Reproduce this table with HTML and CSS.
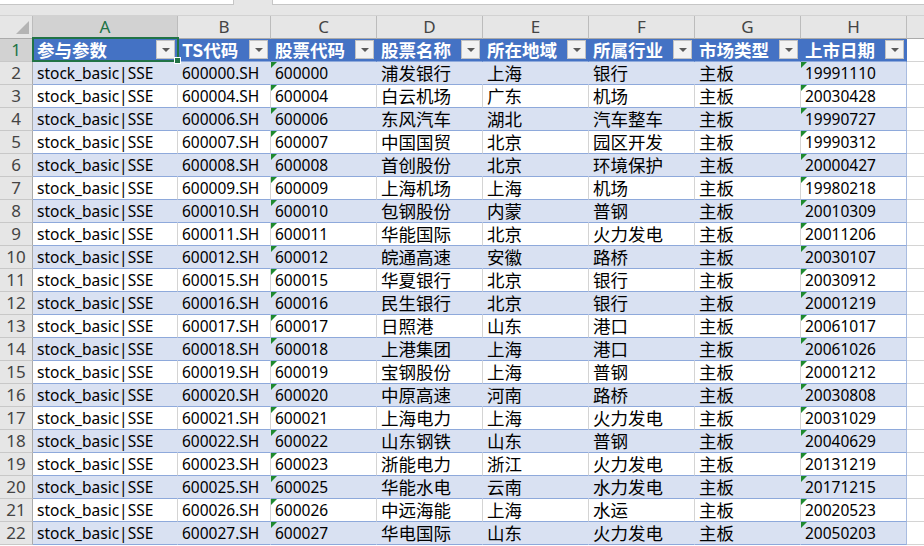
FILE: index.html
```html
<!DOCTYPE html>
<html lang="zh-CN">
<head>
<meta charset="utf-8">
<title>stock_basic</title>
<link rel="stylesheet" href="styles.css">
</head>
<body>
<div class="topbar"><div class="box1"></div><div class="box2"></div></div>
<div class="gap"></div>
<div class="sheet">
  <div class="row colhdr">
    <div class="corner"><span class="tri"></span></div>
    <div class="ch sel">A</div><div class="ch">B</div><div class="ch">C</div><div class="ch">D</div><div class="ch">E</div><div class="ch">F</div><div class="ch">G</div><div class="ch">H</div><div class="ch last"></div>
  </div>
  <div class="row head">
    <div class="rh sel">1</div>
    <div class="hd a1">参与参数<span class="fb"></span></div>
    <div class="hd">TS代码<span class="fb"></span></div>
    <div class="hd">股票代码<span class="fb"></span></div>
    <div class="hd">股票名称<span class="fb"></span></div>
    <div class="hd">所在地域<span class="fb"></span></div>
    <div class="hd">所属行业<span class="fb"></span></div>
    <div class="hd">市场类型<span class="fb"></span></div>
    <div class="hd">上市日期<span class="fb"></span></div>
    <div class="x"></div>
  </div>
  <div class="row band"><div class="rh">2</div><div class="c">stock_basic|SSE</div><div class="c">600000.SH</div><div class="c t">600000</div><div class="c">浦发银行</div><div class="c">上海</div><div class="c">银行</div><div class="c">主板</div><div class="c t h">19991110</div><div class="x"></div></div>
  <div class="row"><div class="rh">3</div><div class="c">stock_basic|SSE</div><div class="c">600004.SH</div><div class="c t">600004</div><div class="c">白云机场</div><div class="c">广东</div><div class="c">机场</div><div class="c">主板</div><div class="c t h">20030428</div><div class="x"></div></div>
  <div class="row band"><div class="rh">4</div><div class="c">stock_basic|SSE</div><div class="c">600006.SH</div><div class="c t">600006</div><div class="c">东风汽车</div><div class="c">湖北</div><div class="c">汽车整车</div><div class="c">主板</div><div class="c t h">19990727</div><div class="x"></div></div>
  <div class="row"><div class="rh">5</div><div class="c">stock_basic|SSE</div><div class="c">600007.SH</div><div class="c t">600007</div><div class="c">中国国贸</div><div class="c">北京</div><div class="c">园区开发</div><div class="c">主板</div><div class="c t h">19990312</div><div class="x"></div></div>
  <div class="row band"><div class="rh">6</div><div class="c">stock_basic|SSE</div><div class="c">600008.SH</div><div class="c t">600008</div><div class="c">首创股份</div><div class="c">北京</div><div class="c">环境保护</div><div class="c">主板</div><div class="c t h">20000427</div><div class="x"></div></div>
  <div class="row"><div class="rh">7</div><div class="c">stock_basic|SSE</div><div class="c">600009.SH</div><div class="c t">600009</div><div class="c">上海机场</div><div class="c">上海</div><div class="c">机场</div><div class="c">主板</div><div class="c t h">19980218</div><div class="x"></div></div>
  <div class="row band"><div class="rh">8</div><div class="c">stock_basic|SSE</div><div class="c">600010.SH</div><div class="c t">600010</div><div class="c">包钢股份</div><div class="c">内蒙</div><div class="c">普钢</div><div class="c">主板</div><div class="c t h">20010309</div><div class="x"></div></div>
  <div class="row"><div class="rh">9</div><div class="c">stock_basic|SSE</div><div class="c">600011.SH</div><div class="c t">600011</div><div class="c">华能国际</div><div class="c">北京</div><div class="c">火力发电</div><div class="c">主板</div><div class="c t h">20011206</div><div class="x"></div></div>
  <div class="row band"><div class="rh">10</div><div class="c">stock_basic|SSE</div><div class="c">600012.SH</div><div class="c t">600012</div><div class="c">皖通高速</div><div class="c">安徽</div><div class="c">路桥</div><div class="c">主板</div><div class="c t h">20030107</div><div class="x"></div></div>
  <div class="row"><div class="rh">11</div><div class="c">stock_basic|SSE</div><div class="c">600015.SH</div><div class="c t">600015</div><div class="c">华夏银行</div><div class="c">北京</div><div class="c">银行</div><div class="c">主板</div><div class="c t h">20030912</div><div class="x"></div></div>
  <div class="row band"><div class="rh">12</div><div class="c">stock_basic|SSE</div><div class="c">600016.SH</div><div class="c t">600016</div><div class="c">民生银行</div><div class="c">北京</div><div class="c">银行</div><div class="c">主板</div><div class="c t h">20001219</div><div class="x"></div></div>
  <div class="row"><div class="rh">13</div><div class="c">stock_basic|SSE</div><div class="c">600017.SH</div><div class="c t">600017</div><div class="c">日照港</div><div class="c">山东</div><div class="c">港口</div><div class="c">主板</div><div class="c t h">20061017</div><div class="x"></div></div>
  <div class="row band"><div class="rh">14</div><div class="c">stock_basic|SSE</div><div class="c">600018.SH</div><div class="c t">600018</div><div class="c">上港集团</div><div class="c">上海</div><div class="c">港口</div><div class="c">主板</div><div class="c t h">20061026</div><div class="x"></div></div>
  <div class="row"><div class="rh">15</div><div class="c">stock_basic|SSE</div><div class="c">600019.SH</div><div class="c t">600019</div><div class="c">宝钢股份</div><div class="c">上海</div><div class="c">普钢</div><div class="c">主板</div><div class="c t h">20001212</div><div class="x"></div></div>
  <div class="row band"><div class="rh">16</div><div class="c">stock_basic|SSE</div><div class="c">600020.SH</div><div class="c t">600020</div><div class="c">中原高速</div><div class="c">河南</div><div class="c">路桥</div><div class="c">主板</div><div class="c t h">20030808</div><div class="x"></div></div>
  <div class="row"><div class="rh">17</div><div class="c">stock_basic|SSE</div><div class="c">600021.SH</div><div class="c t">600021</div><div class="c">上海电力</div><div class="c">上海</div><div class="c">火力发电</div><div class="c">主板</div><div class="c t h">20031029</div><div class="x"></div></div>
  <div class="row band"><div class="rh">18</div><div class="c">stock_basic|SSE</div><div class="c">600022.SH</div><div class="c t">600022</div><div class="c">山东钢铁</div><div class="c">山东</div><div class="c">普钢</div><div class="c">主板</div><div class="c t h">20040629</div><div class="x"></div></div>
  <div class="row"><div class="rh">19</div><div class="c">stock_basic|SSE</div><div class="c">600023.SH</div><div class="c t">600023</div><div class="c">浙能电力</div><div class="c">浙江</div><div class="c">火力发电</div><div class="c">主板</div><div class="c t h">20131219</div><div class="x"></div></div>
  <div class="row band"><div class="rh">20</div><div class="c">stock_basic|SSE</div><div class="c">600025.SH</div><div class="c t">600025</div><div class="c">华能水电</div><div class="c">云南</div><div class="c">水力发电</div><div class="c">主板</div><div class="c t h">20171215</div><div class="x"></div></div>
  <div class="row"><div class="rh">21</div><div class="c">stock_basic|SSE</div><div class="c">600026.SH</div><div class="c t">600026</div><div class="c">中远海能</div><div class="c">上海</div><div class="c">水运</div><div class="c">主板</div><div class="c t h">20020523</div><div class="x"></div></div>
  <div class="row band"><div class="rh">22</div><div class="c">stock_basic|SSE</div><div class="c">600027.SH</div><div class="c t">600027</div><div class="c">华电国际</div><div class="c">山东</div><div class="c">火力发电</div><div class="c">主板</div><div class="c t h">20050203</div><div class="x"></div></div>
</div>
</body>
</html>
```

FILE: styles.css
```css
html, body {
  margin: 0;
  padding: 0;
  background: #e6e6e6;
  overflow: hidden;
  width: 924px;
  height: 546px;
}
body { background: #fff; }

.topbar {
  display: flex;
  height: 5px;
  background: #e6e6e6;
}
.box1 {
  width: 233px;
  height: 4px;
  background: #fff;
  border-right: 1px solid #c6c6c6;
  border-bottom: 1px solid #c6c6c6;
}
.box2 {
  margin-left: 38px;
  flex: 1;
  height: 4px;
  background: #fff;
  border-left: 1px solid #c6c6c6;
  border-bottom: 1px solid #c6c6c6;
}
.gap {
  height: 10px;
  border-bottom: 1px solid #d2d2d2;
  background: #e6e6e6;
}

.sheet {
  display: grid;
  grid-template-columns: 33px 145px 93px 106px 106px 106px 106px 106px 106px 1fr;
  grid-auto-rows: 23px;
  font-family: "Noto Sans CJK SC", "Noto Sans", sans-serif;
  font-size: 17.5px;
  color: #000;
}
.row { display: contents; }

.sheet > .row > div {
  box-sizing: border-box;
  white-space: nowrap;
}

/* column header row */
.corner {
  position: relative;
  background: #e6e6e6;
  border-right: 1px solid #bcbcbc;
  border-bottom: 1px solid #ababab;
}
.tri {
  position: absolute;
  right: 3px;
  bottom: 4px;
  width: 0;
  height: 0;
  border-left: 13px solid transparent;
  border-bottom: 13px solid #b4b4b4;
}
.ch {
  background: #e6e6e6;
  border-right: 1px solid #bcbcbc;
  border-bottom: 1px solid #ababab;
  text-align: center;
  font-family: "Noto Sans", "Liberation Sans", sans-serif;
  font-size: 17px;
  line-height: 22px;
  color: #444;
}
.ch.sel {
  background: #d2d2d2;
  color: #217346;
  border-bottom: 2px solid #217346;
}
.ch.last { border-right: none; }

/* row headers */
.rh {
  background: #e6e6e6;
  border-right: 1px solid #ababab;
  border-bottom: 1px solid #c8c8c8;
  text-align: center;
  font-family: "Noto Sans", "Liberation Sans", sans-serif;
  font-size: 17px;
  line-height: 22px;
  color: #444;
}
.rh.sel {
  background: #d2d2d2;
  color: #217346;
}

/* table header row */
.hd {
  position: relative;
  background: #4472c4;
  color: #fff;
  font-weight: bold;
  padding-left: 4px;
  line-height: 22px;
  border-bottom: 1px solid #8ea9db;
  border-right: 1px solid #4472c4;
}
.fb {
  position: absolute;
  right: 2px;
  top: 1px;
  width: 19px;
  height: 19px;
  box-sizing: border-box;
  background: #f2f2f2;
  border: 1px solid #c2c2c2;
}
.fb::after {
  content: "";
  position: absolute;
  left: 5px;
  top: 7px;
  width: 0;
  height: 0;
  border-left: 4px solid transparent;
  border-right: 4px solid transparent;
  border-top: 4px solid #595959;
}
.a1 { z-index: 2; }
.a1::after {
  content: "";
  position: absolute;
  left: -1px;
  top: -2px;
  right: -2px;
  bottom: -1px;
  border: 2px solid #217346;
  pointer-events: none;
}
.a1::before {
  content: "";
  position: absolute;
  right: -4px;
  bottom: -3px;
  width: 5px;
  height: 5px;
  background: #217346;
  border: 1px solid #fff;
  z-index: 3;
}

/* data cells */
.c {
  position: relative;
  background: #fff;
  padding-left: 4px;
  line-height: 22px;
  border-right: 1px solid #d4d4d4;
  border-bottom: 1px solid #8ea9db;
}
.row > .c:nth-child(2),
.row > .c:nth-child(3),
.row > .c:nth-child(4),
.row > .c:nth-child(9) {
  font-family: "Noto Sans", "Liberation Sans", sans-serif;
  font-size: 15.5px;
}
.band .c {
  background: #d9e1f2;
  border-right-color: #d9e1f2;
}
.c.h,
.band .c.h { border-right-color: #a9bce0; }
.c.t::before {
  content: "";
  position: absolute;
  left: 0;
  top: 0;
  width: 0;
  height: 0;
  border-top: 6px solid #1e8a2e;
  border-right: 6px solid transparent;
}
.x {
  background: #fff;
  border-bottom: 1px solid #d4d4d4;
}
```
